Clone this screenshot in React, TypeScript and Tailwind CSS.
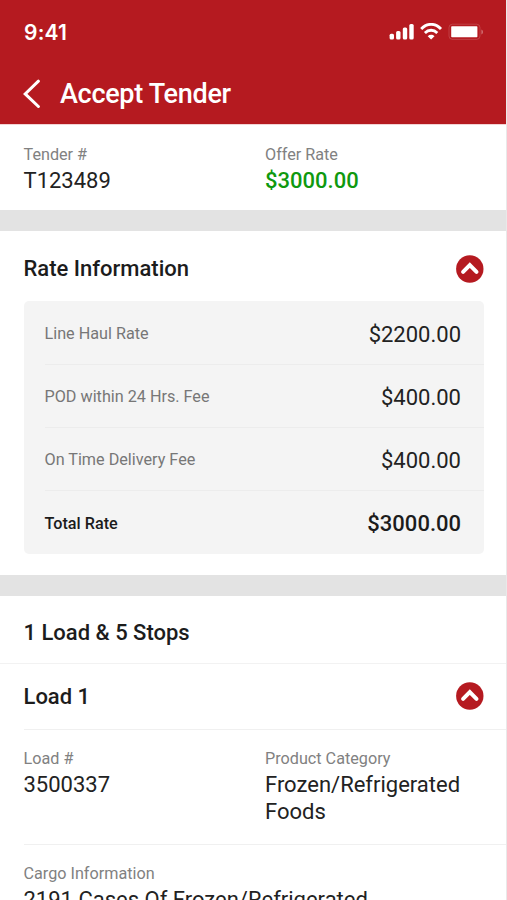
import { useState, type ReactNode } from "react";

const RATES = [
  { label: "Line Haul Rate", amount: "$2200.00" },
  { label: "POD within 24 Hrs. Fee", amount: "$400.00" },
  { label: "On Time Delivery Fee", amount: "$400.00" },
];

function StatusBar() {
  return (
    <div className="flex h-16 items-center justify-between pr-[22px] pl-6">
      <span className="pt-px font-['Inter',sans-serif] text-[21px] leading-6 font-semibold tracking-[0.2px]">
        9:41
      </span>
      <svg width="95" height="18" viewBox="0 0 95 18" fill="none">
        <rect x="0.6" y="10.7" width="4.4" height="5.8" rx="1.5" fill="#fff" />
        <rect x="7.1" y="8" width="4.4" height="8.5" rx="1.5" fill="#fff" />
        <rect x="13.8" y="4.4" width="4.4" height="12.1" rx="1.5" fill="#fff" />
        <rect x="20.3" y="1" width="4.4" height="15.5" rx="1.5" fill="#fff" />
        <path
          d="M32.2 6C38-.3 46.2-.3 52 6M35.9 10c3.6-3.7 8.8-3.7 12.4 0"
          stroke="#fff"
          strokeWidth="2.8"
        />
        <path
          d="M38.7 13.2c2-1.9 4.8-1.9 6.8 0l-3.4 3.4z"
          fill="#fff"
        />
        <rect
          x="60"
          y="1.2"
          width="31"
          height="15.2"
          rx="3.4"
          stroke="#fff"
          strokeOpacity="0.16"
        />
        <rect x="62.2" y="3.3" width="26.2" height="10.9" rx="0.8" fill="#fff" />
        <path d="M92.4 6.4c2.2 1 2.2 4 0 5z" fill="#fff" fillOpacity="0.35" />
      </svg>
    </div>
  );
}

function Field({ label, children }: { label: string; children: ReactNode }) {
  return (
    <div>
      <p className="text-[16.2px] leading-5 text-[#818181]">{label}</p>
      <div className="mt-[3px] text-[22px] leading-[26.5px] text-[#222]">
        {children}
      </div>
    </div>
  );
}

function CollapseButton({ open, onClick }: { open: boolean; onClick: () => void }) {
  return (
    <button onClick={onClick} aria-expanded={open} className="h-7 w-7">
      <svg viewBox="0 0 28 28" className={open ? "h-7 w-7" : "h-7 w-7 rotate-180"}>
        <circle cx="13.8" cy="14" r="13.7" fill="#b51a20" />
        <path
          d="m7.1 16.9 6.7-6.7 6.7 6.7"
          fill="none"
          stroke="#fff"
          strokeWidth="4"
          strokeLinecap="round"
        />
      </svg>
    </button>
  );
}

export default function App() {
  const [ratesOpen, setRatesOpen] = useState(true);
  const [loadOpen, setLoadOpen] = useState(true);

  return (
    <div className="h-[900px] w-[507px] overflow-hidden border-r border-[#e9e9e9] bg-white font-['Roboto',sans-serif] text-[#1c1c1c]">
      <header className="h-[124px] bg-[#b51a20] text-white">
        <StatusBar />
        <div className="flex h-[60px] items-center pl-[22px]">
          <button aria-label="Back">
            <svg width="18" height="30" viewBox="0 0 18 30" fill="none">
              <path
                d="M16.4 2.2 3.2 14.9l13.2 12.6"
                stroke="#fff"
                strokeWidth="3"
                strokeLinecap="round"
              />
            </svg>
          </button>
          <h1 className="ml-5 text-[27px] leading-8 font-medium tracking-[-0.3px]">
            Accept Tender
          </h1>
        </div>
      </header>

      <section className="grid h-[86px] grid-cols-[241.5px_1fr] border-t border-[#f3d3d4] pt-5 pl-[23.5px]">
        <Field label="Tender #">T123489</Field>
        <Field label="Offer Rate">
          <span className="font-medium text-[#0f990f]">$3000.00</span>
        </Field>
      </section>

      <div className="h-[21px] bg-[#e3e3e3]" />

      <section className="pr-[22px] pb-[21px] pl-[23.5px]">
        <div className="flex h-[70px] items-center justify-between pt-1.5">
          <h2 className="text-[22px] leading-7 font-medium">Rate Information</h2>
          <CollapseButton open={ratesOpen} onClick={() => setRatesOpen(!ratesOpen)} />
        </div>
        {ratesOpen && (
          <div className="rounded-[5px] bg-[#f4f4f4] pt-px pl-[21px]">
            {RATES.map((rate) => (
              <div
                key={rate.label}
                className="flex h-[63px] items-center justify-between border-b border-[#ececec] pt-0.5 pr-[23px]"
              >
                <span className="text-[16.2px] text-[#777]">{rate.label}</span>
                <span className="text-[22px] text-[#222]">{rate.amount}</span>
              </div>
            ))}
            <div className="flex h-[63px] items-center justify-between pt-0.5 pr-[23px] font-medium">
              <span className="pt-px text-[16.2px]">Total Rate</span>
              <span className="text-[22px]">$3000.00</span>
            </div>
          </div>
        )}
      </section>

      <div className="h-[21px] bg-[#e3e3e3]" />

      <section>
        <h2 className="flex h-[68px] items-center border-b border-[#f2f2f2] pt-1.5 pl-[23.5px] text-[22px] font-medium">
          1 Load &amp; 5 Stops
        </h2>
        <div className="ml-[23.5px] flex h-[66px] items-center justify-between border-b border-[#f0f0f0] pr-[22px] pb-px">
          <h3 className="text-[22px] font-medium">Load 1</h3>
          <CollapseButton open={loadOpen} onClick={() => setLoadOpen(!loadOpen)} />
        </div>
        {loadOpen && (
          <div className="ml-[23.5px]">
            <div className="grid h-[115px] grid-cols-[241.5px_1fr] border-b border-[#f0f0f0] pt-[19px]">
              <Field label="Load #">3500337</Field>
              <Field label="Product Category">
                Frozen/Refrigerated
                <br />
                Foods
              </Field>
            </div>
            <div className="pt-[19px]">
              <Field label="Cargo Information">2191 Cases Of Frozen/Refrigerated</Field>
            </div>
          </div>
        )}
      </section>
    </div>
  );
}
